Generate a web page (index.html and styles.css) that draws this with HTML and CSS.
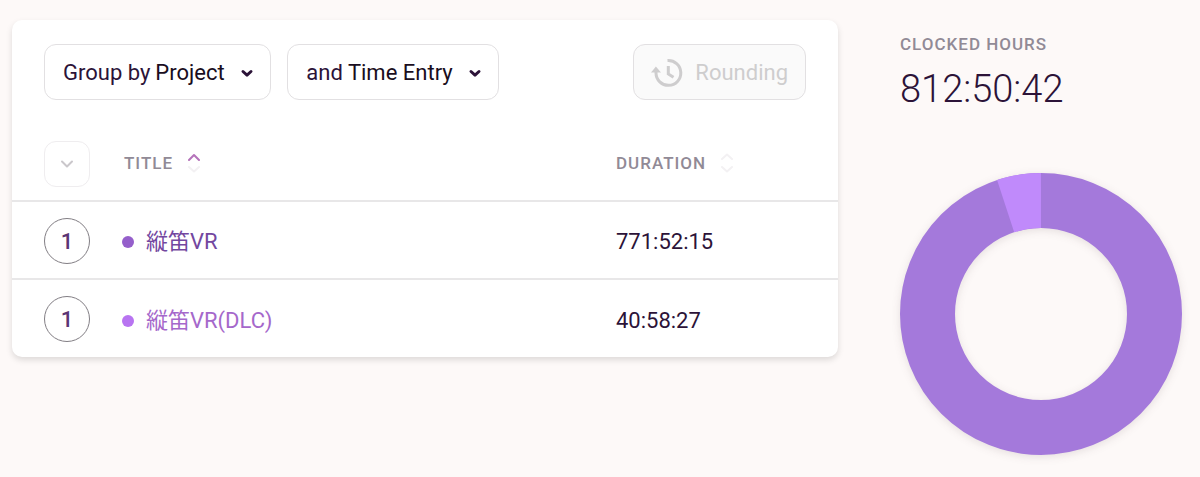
FILE: index.html
```html
<!DOCTYPE html>
<html lang="en">
<head>
<meta charset="utf-8">
<meta name="viewport" content="width=device-width, initial-scale=1">
<title>Summary report</title>
<link rel="stylesheet" href="styles.css">
</head>
<body>
<main class="report">
  <section class="card">
    <div class="toolbar">
      <label class="picker">
        <span>Group by</span>
        <select class="picker-select"><option>Project</option></select>
        <svg class="picker-arrow" width="14" height="10" viewBox="0 0 14 10" aria-hidden="true"><path d="M3 3.500l4 3.600L11 3.500"/></svg>
      </label>
      <label class="picker">
        <span>and</span>
        <select class="picker-select"><option>Time Entry</option></select>
        <svg class="picker-arrow" width="14" height="10" viewBox="0 0 14 10" aria-hidden="true"><path d="M3 3.500l4 3.600L11 3.500"/></svg>
      </label>
      <button class="rounding" type="button" disabled>
        <svg width="32" height="30" viewBox="0 0 32 30" aria-hidden="true">
          <path class="icon-line" d="M16.500 2.600A12.400 12.400 0 1 1 5 15V13"/>
          <path class="icon-fill" d="M0 14.500L4.900 8.400L10 14.500z"/>
          <path class="icon-line" d="M17.300 8V16L22.500 19.300"/>
        </svg>
        Rounding
      </button>
    </div>
    <table class="entries">
      <colgroup><col class="col-count"><col><col class="col-duration"></colgroup>
      <thead>
        <tr>
          <th>
            <button class="expand" type="button" aria-label="Expand all">
              <svg width="14" height="10" viewBox="0 0 14 10" aria-hidden="true"><path d="M2 2.500l5 5 5-5"/></svg>
            </button>
          </th>
          <th aria-sort="ascending">
            <button class="sort" type="button">Title
              <svg width="12" height="20" viewBox="0 0 12 20" aria-hidden="true"><path class="sort-on" d="M1 7l5-5 5 5"/><path d="M1 14l5 4.500 5-4.500"/></svg>
            </button>
          </th>
          <th>
            <button class="sort" type="button">Duration
              <svg width="12" height="20" viewBox="0 0 12 20" aria-hidden="true"><path d="M1 6l5-4.500 5 4.500"/><path d="M1 14l5 4.500 5-4.500"/></svg>
            </button>
          </th>
        </tr>
      </thead>
      <tbody>
        <tr>
          <td><button class="count" type="button">1</button></td>
          <td><span class="project project-main">縦笛VR</span></td>
          <td>771:52:15</td>
        </tr>
        <tr>
          <td><button class="count" type="button">1</button></td>
          <td><span class="project project-dlc">縦笛VR(DLC)</span></td>
          <td>40:58:27</td>
        </tr>
      </tbody>
    </table>
  </section>
  <aside class="totals">
    <h2 class="totals-label">Clocked hours</h2>
    <p class="totals-value">812:50:42</p>
    <svg class="donut" viewBox="0 0 282 282" role="img" aria-label="Hours by project">
      <circle class="slice slice-main" cx="141" cy="141" r="113.500"/>
      <circle class="slice slice-dlc" cx="141" cy="141" r="113.500" pathLength="100" stroke-dasharray="5.04 94.96" transform="rotate(-108.150 141 141)"/>
    </svg>
  </aside>
</main>
</body>
</html>
```
FILE: styles.css
```css
* { box-sizing: border-box; }

body {
  margin: 0;
  background: #fdf9f8;
  color: #2c1338;
  font: 22px/28px Roboto, "Noto Sans CJK JP", sans-serif;
}

button, select {
  font: inherit;
  color: inherit;
}

.report {
  display: grid;
  grid-template-columns: minmax(0, 1fr) 282px;
  gap: 62px;
  align-items: start;
  padding: 20px 18px 20px 12px;
}

.card {
  background: #fff;
  border-radius: 10px;
  box-shadow: 0 3px 6px rgba(0, 0, 0, 0.13);
}

.toolbar {
  display: flex;
  gap: 16px;
  padding: 24px 32px 0;
}

.picker, .rounding {
  display: flex;
  align-items: center;
  height: 56px;
  padding: 1px 16px 0 18px;
  border: 1px solid #e2e0e2;
  border-radius: 12px;
}

.picker-select {
  appearance: none;
  margin: 0 0 0 5px;
  padding: 0;
  border: 0;
  background: none;
  color: #190d20;
}

.picker-arrow {
  margin-left: 15px;
}

svg path {
  fill: none;
  stroke-linecap: round;
  stroke-linejoin: round;
}

.picker-arrow path {
  stroke: #2c1338;
  stroke-width: 3;
}

.rounding {
  gap: 12px;
  margin-left: auto;
  padding: 1px 17px 0;
  background: #fafafa;
  color: #cecdce;
}

.rounding .icon-line {
  stroke: #cecdce;
  stroke-width: 3;
  stroke-linecap: butt;
  stroke-linejoin: miter;
}

.rounding .icon-fill {
  fill: #cecdce;
}

.entries {
  width: 100%;
  table-layout: fixed;
  border-collapse: separate;
  border-spacing: 0;
}

.col-count { width: 110px; }
.col-duration { width: 222px; }

.entries th, .entries td {
  padding: 16px 0 14px;
  border-bottom: 2px solid #e8e7e8;
  text-align: left;
  font-weight: 400;
}

.entries td:nth-child(n+2) {
  padding: 17px 0 13px;
}

.entries th {
  padding: 41px 0 13px;
}

.entries th:nth-child(n+2) {
  padding: 40px 0 14px;
}

.entries th:first-child, .entries td:first-child {
  padding-left: 32px;
}

.entries tbody tr:last-child td {
  border-bottom: 0;
}

.entries tbody tr:last-child td:first-child {
  padding-bottom: 15px;
}

.expand, .count {
  display: grid;
  place-items: center;
  width: 46px;
  height: 46px;
  padding: 0;
  background: #fff;
}

.expand {
  border: 1px solid #efedef;
  border-radius: 12px;
}

.expand path {
  stroke: #cac7cb;
  stroke-width: 2;
}

.count {
  padding-top: 1px;
  border: 1px solid #827e84;
  border-radius: 50%;
  color: #5b3474;
  font-weight: 500;
}

.sort {
  display: flex;
  align-items: center;
  gap: 15px;
  padding: 0;
  border: 0;
  background: none;
}

.entries th:nth-child(2) .sort { padding-left: 2px; }

.sort, .totals-label {
  color: #918a96;
  font-size: 17px;
  line-height: 24px;
  font-weight: 500;
  letter-spacing: 1px;
  text-transform: uppercase;
}

.sort path {
  stroke: #f3f1f3;
  stroke-width: 2;
}

.sort .sort-on { stroke: #b573ba; }

.project {
  display: flex;
  align-items: center;
  gap: 12px;
}

.project::before {
  content: "";
  width: 12px;
  height: 12px;
  border-radius: 50%;
  background: currentColor;
}

.project-main { color: #7347a0; }
.project-main::before { background: #955fcb; }
.project-dlc { color: #a568cb; }
.project-dlc::before { background: #b874f1; }

.totals {
  padding-top: 12px;
}

.totals-label, .totals-value {
  margin: 0;
}

.totals-value {
  padding-top: 10px;
  font-size: 38px;
  line-height: 46px;
  font-weight: 300;
}

.donut {
  display: block;
  width: 100%;
  margin-top: 61px;
  overflow: visible;
  filter: drop-shadow(0 2px 4px rgba(60, 30, 40, 0.12));
}

.slice {
  fill: none;
  stroke-width: 55;
}

.slice-main { stroke: #a479db; }
.slice-dlc { stroke: #c08afb; }
```
